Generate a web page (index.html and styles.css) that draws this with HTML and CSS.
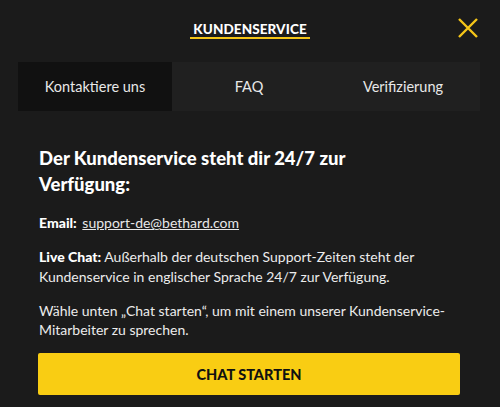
FILE: index.html
```html
<!DOCTYPE html>
<html lang="de">
<head>
  <meta charset="UTF-8" />
  <meta name="viewport" content="width=device-width, initial-scale=1" />
  <title>Kundenservice</title>
  <link rel="stylesheet" href="styles.css">
</head>
<body>
  <div class="modal">
    <div class="header">
      <h1 class="title">KUNDENSERVICE</h1>
      <button class="close" aria-label="Schließen">
        <svg width="22" height="22" viewBox="0 0 22 22">
          <path d="M2 2 L20 20 M20 2 L2 20" stroke="#f5c518" stroke-width="2.4" fill="none" />
        </svg>
      </button>
    </div>

    <div class="tabs">
      <div class="tab active">Kontaktiere uns</div>
      <div class="tab">FAQ</div>
      <div class="tab">Verifizierung</div>
    </div>

    <div class="content">
      <h2>Der Kundenservice steht dir 24/7 zur Verfügung:</h2>
      <p><b>Email:</b> <a href="#">support-de@bethard.com</a></p>
      <p><b>Live Chat:</b> Außerhalb der deutschen Support-Zeiten steht der Kundenservice in englischer Sprache 24/7 zur Verfügung.</p>
      <p>Wähle unten „Chat starten“, um mit einem unserer Kundenservice-Mitarbeiter zu sprechen.</p>
      <button class="chat-btn">CHAT STARTEN</button>
    </div>
  </div>
</body>
</html>
```

FILE: styles.css
```css
body {
  margin: 0;
  background-color: #1b1b1b;
  color: #ececec;
  font-family: "Lato", "Noto Sans", sans-serif;
}

.modal {
  width: 500px;
}

.header {
  position: relative;
  height: 62px;
  display: flex;
  justify-content: center;
}

.title {
  margin: 21px 0 0;
  height: 16px;
  padding: 0 3px;
  font-size: 13.5px;
  font-weight: 900;
  letter-spacing: 0.1px;
  color: #fff;
  line-height: 16px;
  border-bottom: 2px solid #f5c518;
}

.close {
  position: absolute;
  right: 21px;
  top: 17px;
  background: none;
  border: none;
  padding: 0;
  width: 22px;
  height: 22px;
  cursor: pointer;
}

.tabs {
  display: grid;
  grid-template-columns: repeat(3, 1fr);
  margin: 0 20px 0 18px;
  background-color: #202020;
}

.tab {
  height: 49px;
  display: flex;
  align-items: center;
  justify-content: center;
  font-size: 14.5px;
  color: #e8e8e8;
}

.tab.active {
  background-color: #111111;
}

.content {
  padding: 34px 40px 0 38px;
}

.content h2 {
  max-width: 320px;
  margin: 0 0 16px 1px;
  font-size: 18.5px;
  font-weight: 900;
  line-height: 26px;
  color: #fff;
}

.content p {
  margin: 0 0 14.5px 1px;
  font-size: 14px;
  line-height: 19.5px;
}

.content b {
  font-weight: 900;
  color: #fff;
}

.content a {
  margin-left: 2px;
  color: #e8e8e8;
}

.chat-btn {
  display: block;
  width: 100%;
  height: 42px;
  margin-top: -1px;
  border: none;
  border-radius: 2px;
  background-color: #f9cd13;
  color: #111;
  font-family: inherit;
  font-size: 14.5px;
  font-weight: 900;
  cursor: pointer;
}
```
